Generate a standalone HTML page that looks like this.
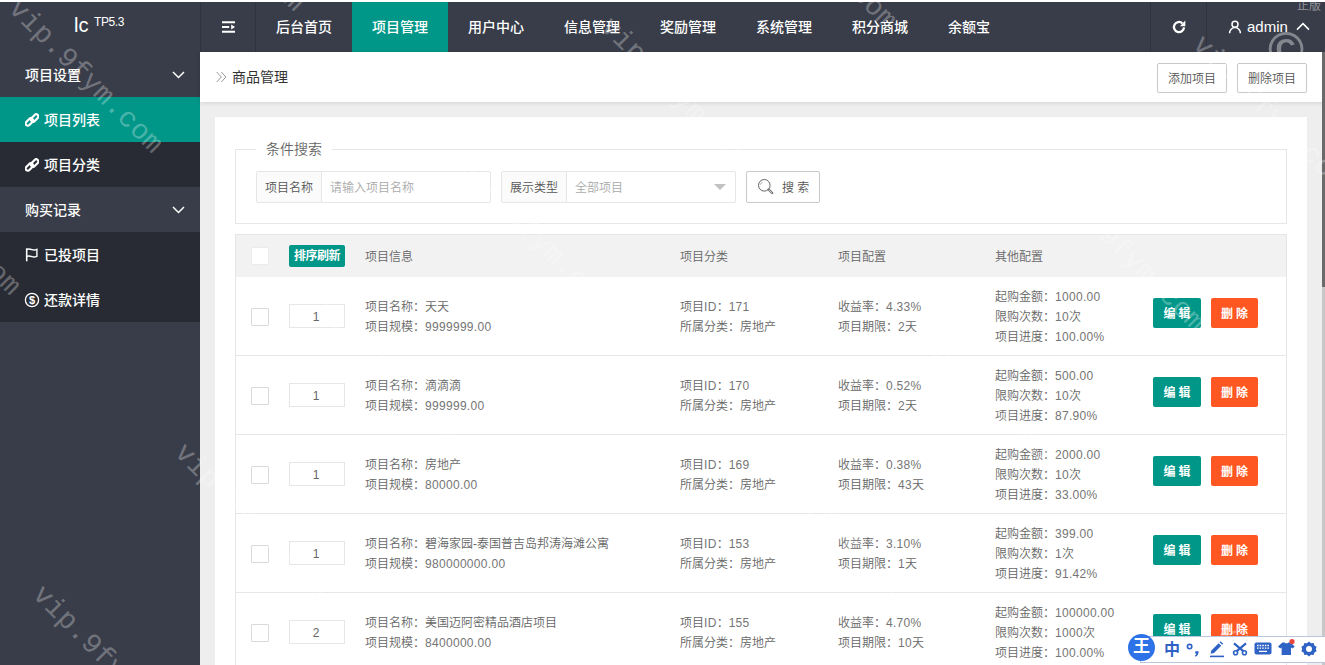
<!DOCTYPE html>
<html lang="zh-CN">
<head>
<meta charset="utf-8">
<title>商品管理</title>
<style>
*{box-sizing:border-box;margin:0;padding:0}
html,body{width:1325px;height:665px;overflow:hidden;background:#eeeeee}
body{font-family:"Liberation Sans","Noto Sans CJK SC",sans-serif;font-size:12px;color:#666;position:relative}
.abs{position:absolute}
#header{position:absolute;left:0;top:0;width:1325px;height:52px;background:#393d49;border-top:2px solid #fff}
#logo{position:absolute;left:74px;top:8px;color:#fff;font-size:20px;line-height:30px;white-space:nowrap}
#logosup{position:absolute;left:94px;top:8px;color:#fff;font-size:12px;line-height:24px;letter-spacing:-0.4px;white-space:nowrap}
.nav{position:absolute;top:0;height:50px;line-height:50px;color:#fff;font-size:14px;font-weight:500;text-align:center;white-space:nowrap}
.nav.on{background:#009688}
.vsep{position:absolute;top:0;width:1px;height:50px;background:#2f333d}
#side{position:absolute;left:0;top:52px;width:200px;height:613px;background:#393d49}
.si{position:absolute;left:0;width:200px;height:45px;line-height:47px;color:#fff;font-size:14px;font-weight:500;white-space:nowrap}
.si.p{padding-left:25px}
.si.c{background:#282b33;padding-left:44px}
.si.c.on{background:#009688}
.si svg{position:absolute}
#crumb{position:absolute;left:200px;top:52px;width:1125px;height:50px;background:#fff;box-shadow:0 1px 4px rgba(0,0,0,.12)}
#crumb .t{position:absolute;left:32px;top:0;line-height:50px;font-size:14px;color:#333}
.btnp{position:absolute;top:11px;height:30px;line-height:30px;border:1px solid #c9c9c9;border-radius:2px;background:#fff;color:#555;font-size:12px;text-align:center;font-weight:350}
#card{position:absolute;left:215px;top:117px;width:1092px;height:560px;background:#fff}
#fs{position:absolute;left:20px;top:32px;width:1052px;height:75px;border:1px solid #e6e6e6}
#fs .lg{position:absolute;left:20px;top:-11px;padding:0 10px;background:#fff;font-size:14px;line-height:20px;color:#666;font-weight:350}
.grp{position:absolute;top:21px;height:32px;border:1px solid #e6e6e6;border-radius:2px;background:#fff}
.grp .lb{position:absolute;left:0;top:0;height:30px;line-height:32px;background:#fbfbfb;border-right:1px solid #e6e6e6;text-align:center;color:#555;font-size:12px;font-weight:350}
.grp .ph{position:absolute;top:0;line-height:32px;color:#aaa;font-size:12px;font-weight:350}
#tbl{position:absolute;left:20px;top:117px;width:1052px}
#th{position:absolute;left:0;top:0;width:1052px;height:44px;background:#f2f2f2;border:1px solid #e6e6e6;border-right:1px solid #e6e6e6}
#th span{position:absolute;top:1px;line-height:42px;color:#666;font-weight:350}
.cb{position:absolute;left:15px;width:18px;height:18px;border:1px solid #dadada;border-radius:1px;background:#fff}
.row{position:absolute;left:0;width:1052px;height:79px;border-left:1px solid #e6e6e6;border-right:1px solid #e6e6e6;border-bottom:1px solid #e6e6e6;background:#fff}
.row .sort{position:absolute;left:53px;top:27px;width:56px;height:24px;border:1px solid #e6e6e6;line-height:24px;text-align:center;color:#666;font-size:12px;padding-right:2px}
.row .c{position:absolute;line-height:20px;white-space:nowrap;color:#666;font-weight:350}
.row .c i{font-style:normal;letter-spacing:.3px;color:#757575}
.c1{left:129px}.c2{left:444px}.c3{left:602px}.c4{left:759px}
.t2{top:20px}.t3{top:10px}
.b{position:absolute;top:21px;height:30px;line-height:33px;border-radius:2px;color:#fff;font-weight:bold;font-size:12px;text-align:center;letter-spacing:3px;padding-left:3px}
.be{left:917px;width:48px;background:#009688}
.bd{left:975px;width:47px;background:#ff5722}

#wm{position:absolute;left:0;top:0;width:1325px;height:665px;overflow:hidden;pointer-events:none}
#wm span{position:absolute;font-family:"Liberation Mono",monospace;font-size:28px;line-height:30px;color:rgba(255,255,255,.3);white-space:nowrap;transform-origin:0 0;transform:rotate(45deg);letter-spacing:.3px}
#ime{position:absolute;left:1128px;top:633px;width:197px;height:32px}
#ime .bar{position:absolute;left:12px;top:3px;width:185px;height:27px;background:#fff;border:1px solid #b9c6de;border-right:0}
#ime .ball{position:absolute;left:0;top:1px;width:27px;height:27px;border-radius:50%;background:#2d72e6;color:#fff;font-weight:bold;font-size:17px;line-height:26px;text-align:center}
#ime .ic{position:absolute;color:#2f62c5;line-height:30px}
</style>
</head>
<body>
<div id="header">
  <div id="logo">lc</div><div id="logosup">TP5.3</div>
  <div class="vsep" style="left:200px"></div>
  <div class="vsep" style="left:255px"></div>
  <svg class="abs" style="left:221px;top:18px" width="15" height="14" viewBox="0 0 15 14"><path d="M1 2.2h13M1 7h7.2M1 11.8h13" stroke="#fff" stroke-width="1.9" fill="none"/><path d="M10.2 4.4L14 7l-3.8 2.6z" fill="#fff"/></svg>
  <div class="nav" style="left:256px;width:96px">后台首页</div>
  <div class="nav on" style="left:352px;width:96px">项目管理</div>
  <div class="nav" style="left:448px;width:96px">用户中心</div>
  <div class="nav" style="left:544px;width:96px">信息管理</div>
  <div class="nav" style="left:640px;width:96px">奖励管理</div>
  <div class="nav" style="left:736px;width:96px">系统管理</div>
  <div class="nav" style="left:832px;width:96px">积分商城</div>
  <div class="nav" style="left:928px;width:82px">余额宝</div>
  <div class="vsep" style="left:1150px"></div>
  <div class="vsep" style="left:1206px"></div>
  <svg class="abs" style="left:1171px;top:17px" width="16" height="16" viewBox="0 0 16 16"><path d="M11.4 4.3A5.05 5.05 0 1 0 13.03 8.44" stroke="#fff" stroke-width="2.3" fill="none"/><path d="M14.3 1.4V7.2H8.9z" fill="#fff"/></svg>
  <svg class="abs" style="left:1228px;top:18px" width="14" height="14" viewBox="0 0 14 14"><circle cx="7" cy="4.3" r="3" stroke="#fff" stroke-width="1.5" fill="none"/><path d="M1.6 13.2a5.4 5.6 0 0 1 10.8 0" stroke="#fff" stroke-width="1.5" fill="none"/></svg>
  <div class="nav" style="left:1247px;font-size:15px;line-height:50px">admin</div>
  <svg class="abs" style="left:1296px;top:20px" width="14" height="9" viewBox="0 0 14 9"><path d="M1 7.6L7 1.6l6 6" stroke="#fff" stroke-width="1.5" fill="none"/></svg>
  <div class="abs" style="left:1297px;top:-3px;font-size:12px;line-height:14px;color:rgba(255,255,255,.45);white-space:nowrap">正版</div>
</div>
<div id="side">
  <div class="si p" style="top:0">项目设置<svg style="left:172px;top:19px" width="13" height="8" viewBox="0 0 13 8"><path d="M1 1l5.5 5.5L12 1" stroke="#fff" stroke-width="1.5" fill="none"/></svg></div>
  <div class="si c on" style="top:45px"><svg style="left:25px;top:16px" width="14" height="14" viewBox="0 0 14 14"><g transform="rotate(-45 7 7)" fill="none" stroke="#fff" stroke-width="2.2"><rect x="-0.6" y="4.3" width="8.6" height="4.4" rx="2.2"/><rect x="6" y="5.3" width="8.6" height="4.4" rx="2.2"/></g></svg>项目列表</div>
  <div class="si c" style="top:90px"><svg style="left:25px;top:16px" width="14" height="14" viewBox="0 0 14 14"><g transform="rotate(-45 7 7)" fill="none" stroke="#fff" stroke-width="2.2"><rect x="-0.6" y="4.3" width="8.6" height="4.4" rx="2.2"/><rect x="6" y="5.3" width="8.6" height="4.4" rx="2.2"/></g></svg>项目分类</div>
  <div class="si p" style="top:135px">购买记录<svg style="left:172px;top:19px" width="13" height="8" viewBox="0 0 13 8"><path d="M1 1l5.5 5.5L12 1" stroke="#fff" stroke-width="1.5" fill="none"/></svg></div>
  <div class="si c" style="top:180px"><svg style="left:25px;top:16px" width="14" height="14" viewBox="0 0 14 14"><path d="M1.700 0.300v13" stroke="#fff" stroke-width="1.600" fill="none"/><path d="M1.700 1.400c2-.8 3.600-.4 5.200.200s3.200.6 5-.2v7c-1.800.8-3.400.8-5 .2s-3.200-1-5.200-.2" stroke="#fff" stroke-width="1.400" fill="none"/></svg>已投项目</div>
  <div class="si c" style="top:225px"><svg style="left:24px;top:15px" width="16" height="16" viewBox="0 0 16 16"><circle cx="8" cy="8" r="6.6" stroke="#fff" stroke-width="1.3" fill="none"/><text x="8" y="12" text-anchor="middle" font-family="Liberation Sans,sans-serif" font-weight="bold" font-size="11" fill="#fff">$</text></svg>还款详情</div>
</div>
<div id="crumb">
  <svg class="abs" style="left:16px;top:19px" width="11" height="12" viewBox="0 0 11 12"><path d="M0.7 1l4.6 5-4.6 5M5.3 1l4.6 5-4.6 5" stroke="#999" stroke-width="1" fill="none"/></svg><div class="t">商品管理</div>
  <div class="btnp" style="left:957px;width:70px">添加项目</div>
  <div class="btnp" style="left:1037px;width:70px">删除项目</div>
</div>
<div id="card">
  <div id="fs">
    <div class="lg">条件搜索</div>
    <div class="grp" style="left:20px;width:235px"><div class="lb" style="width:65px">项目名称</div><div class="ph" style="left:73px">请输入项目名称</div></div>
    <div class="grp" style="left:265px;width:235px"><div class="lb" style="width:65px">展示类型</div><div class="ph" style="left:73px">全部项目</div><div class="abs" style="left:212px;top:12px;width:0;height:0;border:6px solid transparent;border-top-color:#c2c2c2;border-bottom-width:0"></div></div>
    <div class="grp" style="left:510px;width:74px;border-color:#c9c9c9"><svg class="abs" style="left:10px;top:6px" width="18" height="18" viewBox="0 0 18 18"><circle cx="7.3" cy="7.3" r="5.8" stroke="#666" stroke-width="1" fill="none"/><path d="M3.6 6.6a3.8 3.8 0 0 1 1.6-2.4" stroke="#888" stroke-width=".8" fill="none"/><path d="M11.6 11.4l3.6 3.6" stroke="#666" stroke-width="2.2" stroke-linecap="round"/><path d="M11.9 11.7l3 3" stroke="#fff" stroke-width=".8" stroke-linecap="round"/></svg><div class="ph" style="left:35px;color:#555">搜 索</div></div>
  </div>
  <div id="tbl">
    <div id="th">
      <div class="cb" style="top:12px;border-color:#ececec"></div>
      <div class="abs" style="left:53px;top:10px;width:56px;height:22px;line-height:22px;background:#009688;color:#fff;border-radius:2px;text-align:center;font-size:12px;font-weight:bold;letter-spacing:-.5px">排序刷新</div>
      <span style="left:129px">项目信息</span>
      <span style="left:444px">项目分类</span>
      <span style="left:602px">项目配置</span>
      <span style="left:759px">其他配置</span>
    </div>
    <div class="row" style="top:43px">
      <div class="cb" style="top:31px"></div><div class="sort">1</div>
      <div class="c c1 t2">项目名称：天天<br>项目规模：<i>9999999.00</i></div>
      <div class="c c2 t2">项目<i>ID</i>：<i>171</i><br>所属分类：房地产</div>
      <div class="c c3 t2">收益率：<i>4.33%</i><br>项目期限：<i>2</i>天</div>
      <div class="c c4 t3">起购金额：<i>1000.00</i><br>限购次数：<i>10</i>次<br>项目进度：<i>100.00%</i></div>
      <div class="b be">编辑</div><div class="b bd">删除</div>
    </div>
    <div class="row" style="top:122px">
      <div class="cb" style="top:31px"></div><div class="sort">1</div>
      <div class="c c1 t2">项目名称：滴滴滴<br>项目规模：<i>999999.00</i></div>
      <div class="c c2 t2">项目<i>ID</i>：<i>170</i><br>所属分类：房地产</div>
      <div class="c c3 t2">收益率：<i>0.52%</i><br>项目期限：<i>2</i>天</div>
      <div class="c c4 t3">起购金额：<i>500.00</i><br>限购次数：<i>10</i>次<br>项目进度：<i>87.90%</i></div>
      <div class="b be">编辑</div><div class="b bd">删除</div>
    </div>
    <div class="row" style="top:201px">
      <div class="cb" style="top:31px"></div><div class="sort">1</div>
      <div class="c c1 t2">项目名称：房地产<br>项目规模：<i>80000.00</i></div>
      <div class="c c2 t2">项目<i>ID</i>：<i>169</i><br>所属分类：房地产</div>
      <div class="c c3 t2">收益率：<i>0.38%</i><br>项目期限：<i>43</i>天</div>
      <div class="c c4 t3">起购金额：<i>2000.00</i><br>限购次数：<i>10</i>次<br>项目进度：<i>33.00%</i></div>
      <div class="b be">编辑</div><div class="b bd">删除</div>
    </div>
    <div class="row" style="top:280px">
      <div class="cb" style="top:31px"></div><div class="sort">1</div>
      <div class="c c1 t2">项目名称：碧海家园-泰国普吉岛邦涛海滩公寓<br>项目规模：<i>980000000.00</i></div>
      <div class="c c2 t2">项目<i>ID</i>：<i>153</i><br>所属分类：房地产</div>
      <div class="c c3 t2">收益率：<i>3.10%</i><br>项目期限：<i>1</i>天</div>
      <div class="c c4 t3">起购金额：<i>399.00</i><br>限购次数：<i>1</i>次<br>项目进度：<i>91.42%</i></div>
      <div class="b be">编辑</div><div class="b bd">删除</div>
    </div>
    <div class="row" style="top:359px">
      <div class="cb" style="top:31px"></div><div class="sort">2</div>
      <div class="c c1 t2">项目名称：美国迈阿密精品酒店项目<br>项目规模：<i>8400000.00</i></div>
      <div class="c c2 t2">项目<i>ID</i>：<i>155</i><br>所属分类：房地产</div>
      <div class="c c3 t2">收益率：<i>4.70%</i><br>项目期限：<i>10</i>天</div>
      <div class="c c4 t3">起购金额：<i>100000.00</i><br>限购次数：<i>1000</i>次<br>项目进度：<i>100.00%</i></div>
      <div class="b be">编辑</div><div class="b bd">删除</div>
    </div>
  </div>
</div>

<div class="abs" style="left:1322px;top:52px;width:3px;height:613px;background:#c8c8c8"></div>
<div class="abs" style="left:1322px;top:52px;width:3px;height:235px;background:#6a6a6a"></div>
<div id="wm">
  <span style="left:1349px;top:-112px">vip.9fym.com</span>
  <span style="left:1207px;top:30px">vip.9fym.com</span>
  <span style="left:757px;top:-130px">vip.9fym.com</span>
  <span style="left:1065px;top:172px">vip.9fym.com</span>
  <span style="left:615px;top:12px">vip.9fym.com</span>
  <span style="left:923px;top:314px">vip.9fym.com</span>
  <span style="left:1231px;top:616px">vip.9fym.com</span>
  <span style="left:165px;top:-148px">vip.9fym.com</span>
  <span style="left:473px;top:154px">vip.9fym.com</span>
  <span style="left:781px;top:456px">vip.9fym.com</span>
  <span style="left:23px;top:-6px">vip.9fym.com</span>
  <span style="left:331px;top:296px">vip.9fym.com</span>
  <span style="left:639px;top:598px">vip.9fym.com</span>
  <span style="left:-119px;top:136px">vip.9fym.com</span>
  <span style="left:189px;top:438px">vip.9fym.com</span>
  <span style="left:47px;top:580px">vip.9fym.com</span>
</div>
<div class="abs" style="left:1268px;top:24px;width:50px;height:28px;overflow:hidden"><div style="position:absolute;left:0;top:-4px;font-size:49px;line-height:58px;color:rgba(255,255,255,.38);font-weight:bold">©</div></div>
<div id="ime">
  <div class="bar"></div>
  <div class="ball">王</div>
  <div class="ic" style="left:36px;font-size:16px;font-weight:bold;top:2px">中</div>
  <svg class="abs" style="left:58px;top:10px" width="15" height="15" viewBox="0 0 15 15"><circle cx="3.6" cy="3.6" r="2.2" stroke="#2f62c5" stroke-width="1.6" fill="none"/><path d="M9.2 8.2h3.4c0 3-1 4.6-3.2 5.6l-.6-1.2c1-.6 1.4-1.3 1.5-2.2H9.2z" fill="#2f62c5"/></svg>
  <svg class="abs" style="left:81px;top:7px" width="16" height="18" viewBox="0 0 16 18"><path d="M2.4 10.4l7.2-7.2 2.6 2.6-7.2 7.2-3.4.8z" fill="#2f62c5"/><path d="M10.6 2.2l1-1 2.6 2.6-1 1z" fill="#2f62c5"/><path d="M1 16.4h14" stroke="#2f62c5" stroke-width="1.6"/></svg>
  <svg class="abs" style="left:104px;top:7px" width="16" height="16" viewBox="0 0 16 16"><path d="M2 3.400l9.600 8M14 3.400L4.400 11.400" stroke="#2f62c5" stroke-width="2.200" fill="none"/><circle cx="3.6" cy="12.8" r="2" stroke="#2f62c5" stroke-width="1.6" fill="none"/><circle cx="12.4" cy="12.8" r="2" stroke="#2f62c5" stroke-width="1.6" fill="none"/></svg>
  <svg class="abs" style="left:126px;top:9px" width="18" height="13" viewBox="0 0 18 13"><rect x=".5" y=".5" width="17" height="12" rx="2" fill="#2f62c5"/><path d="M3 3.5h12M3 6.2h12" stroke="#fff" stroke-width="1.3" stroke-dasharray="1.6 1"/><path d="M5 9.4h8" stroke="#fff" stroke-width="1.3"/></svg>
  <svg class="abs" style="left:149px;top:5px" width="20" height="20" viewBox="0 0 20 20"><path d="M1 8.4l4.4-4h2.2c.6 1.2 3 1.2 3.6 0h2.2l4.4 4-2.4 2.2-1.4-1.2V17H4.6V9.400l-1.400 1.200z" fill="#2f62c5"/><circle cx="15" cy="3.600" r="2.600" fill="#e8453c"/></svg>
  <svg class="abs" style="left:173px;top:8px" width="16" height="16" viewBox="0 0 16 16"><path d="M8 .6l2 1.600 2.600-.2.800 2.400 2.200 1.400-.8 2.200.8 2.200-2.200 1.400-.8 2.400-2.600-.2-2 1.600-2-1.600-2.600.2-.8-2.400L.4 10.200l.8-2.200-.8-2.200 2.200-1.400.8-2.400 2.600.2z" fill="#2f62c5"/><circle cx="8" cy="8" r="3" fill="#fff"/></svg>
</div>
</body>
</html>
